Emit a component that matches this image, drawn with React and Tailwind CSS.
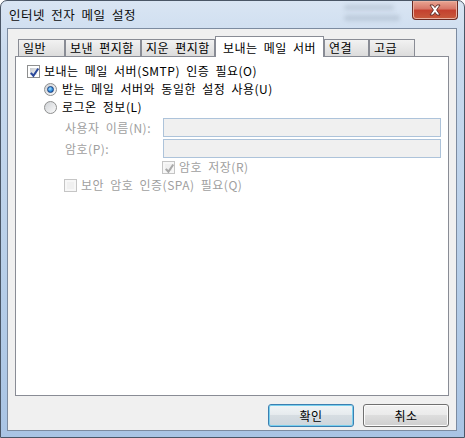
const font = "font-['Noto_Sans_CJK_KR',sans-serif] tracking-[0.5px] [word-spacing:3px]";

function Check({ checked, disabled }) {
  return (
    <span
      className={`flex h-[13px] w-[13px] shrink-0 border p-[2px] ${
        disabled ? "border-[#c5c5c5] bg-[#f7f7f7]" : "border-[#8e8f8f] bg-white"
      }`}
    >
      <span
        className={`relative flex-1 ${
          disabled
            ? "bg-[#f0f0f0]"
            : "bg-linear-to-br from-[#c6cacf] to-[#f3f3f3]"
        }`}
      >
        {checked && (
          <svg
            viewBox="0 0 9 9"
            className="absolute -left-px -top-px h-[11px] w-[11px]"
          >
            <path
              d="M1.5 4.8 L3.6 7.2 L7.6 1.2"
              fill="none"
              stroke={disabled ? "#a9a9a9" : "#2c4a9c"}
              strokeWidth="1.7"
            />
          </svg>
        )}
      </span>
    </span>
  );
}

function Radio({ checked }) {
  return (
    <span className="flex h-[13px] w-[13px] shrink-0 items-center justify-center rounded-full border border-[#8e8f8f] bg-linear-to-br from-[#cfd2d6] to-[#fbfbfb]">
      {checked && (
        <span className="h-[7px] w-[7px] rounded-full border border-[#1c3f7c] bg-[radial-gradient(circle_at_40%_35%,#a6e1ff,#2f8fe0_55%,#0d4fa6)]" />
      )}
    </span>
  );
}

function Tab({ label, w, active }) {
  if (active)
    return (
      <div
        className={`relative z-10 -mb-px flex h-[21px] items-start whitespace-nowrap border border-b-0 border-[#898c95] bg-white pl-[7px] pt-[2px] text-[12px] ${w}`}
      >
        {label}
      </div>
    );
  return (
    <div
      className={`flex h-[17px] items-center whitespace-nowrap border border-b-0 border-[#898c95] bg-linear-to-b from-[#f2f2f2] to-[#dcdcdc] pl-[4px] text-[12px] ${w}`}
    >
      {label}
    </div>
  );
}

function Button({ label, primary }) {
  return (
    <div
      className={`flex h-[23px] w-[86px] items-center justify-center rounded-[3px] border text-[12px] ${
        primary
          ? "border-[#3c7fb1] bg-[linear-gradient(#f1f5f7_0%,#e6ebee_45%,#d6dde2_50%,#cdd6dc_100%)] shadow-[inset_0_0_0_1px_#79d0ee]"
          : "border-[#707070] bg-[linear-gradient(#f2f2f2_0%,#ebebeb_45%,#dddddd_50%,#cfcfcf_100%)] shadow-[inset_0_0_0_1px_#fcfcfc]"
      }`}
    >
      {label}
    </div>
  );
}

export default function App() {
  return (
    <div
      className={`flex h-[438px] w-[465px] flex-col overflow-hidden rounded-t-[7px] border border-[#4a5666] bg-[linear-gradient(180deg,#d9e5f3_0%,#c9daee_12%,#b8cfe9_60%,#a9c4e4_100%)] text-black ${font}`}
    >
      {/* title bar */}
      <div className="flex h-[27px] shrink-0 items-start">
        <div className="pl-[8px] pt-[6px] text-[12.5px] leading-[16px] text-[#0b0b0b]">
          인터넷 전자 메일 설정
        </div>
        {/* blurred stuff behind the glass */}
        <div className="ml-auto mr-[12px] flex flex-col gap-[5px] pt-[4px]">
          <div className="h-[5px] w-[50px] rounded-[3px] bg-[#9aa9ba] opacity-40 blur-[2px]" />
          <div className="h-[6px] w-[56px] rounded-[3px] bg-[#9aa9ba] opacity-40 blur-[2px]" />
        </div>
        <div className="mr-[6px] flex h-[19px] w-[46px] items-center justify-center rounded-b-[4px] border border-t-0 border-[#6b2a22] bg-[linear-gradient(#e9a593_0%,#d67566_45%,#c4402f_50%,#c85a3c_100%)] shadow-[inset_0_0_0_1px_#eab0a0]">
          <svg viewBox="0 0 14 12" className="h-[12px] w-[14px]">
            <path
              d="M2 1 L5 1 L7 3.6 L9 1 L12 1 L8.6 6 L12 11 L9 11 L7 8.4 L5 11 L2 11 L5.4 6 Z"
              fill="#ffffff"
              stroke="#5a2620"
              strokeWidth="0.9"
              strokeLinejoin="round"
            />
          </svg>
        </div>
      </div>

      {/* client area */}
      <div className="mb-[6px] ml-[6px] mr-[7px] flex flex-1 flex-col border border-[#7c8ba0] bg-[#f0f0f0] px-[7px] pt-[7px]">
        {/* tabs */}
        <div className="flex h-[20px] items-end pl-[3px]">
          <Tab label="일반" w="w-[47px]" />
          <Tab label="보낸 편지함" w="w-[76px]" />
          <Tab label="지운 편지함" w="w-[74px]" />
          <Tab label="보내는 메일 서버" w="w-[109px]" active />
          <Tab label="연결" w="w-[45px]" />
          <Tab label="고급" w="w-[46px]" />
        </div>

        {/* panel */}
        <div className="flex h-[340px] flex-col border border-[#898c95] bg-white pr-[7px] pt-[5px] text-[12px]">
          <div className="flex h-[18px] items-center gap-[4px] pl-[11px]">
            <Check checked />
            <span>보내는 메일 서버(SMTP) 인증 필요(O)</span>
          </div>
          <div className="flex h-[18px] items-center gap-[5px] pl-[28px]">
            <Radio checked />
            <span>받는 메일 서버와 동일한 설정 사용(U)</span>
          </div>
          <div className="flex h-[18px] items-center gap-[5px] pl-[28px]">
            <Radio />
            <span>로그온 정보(L)</span>
          </div>
          <div className="mt-[2px] flex h-[19px] items-center pl-[49px]">
            <span className="w-[98px] whitespace-nowrap text-[#a0a0a0]">사용자 이름(N):</span>
            <div className="h-[19px] flex-1 border border-[#adc3da] bg-[#f0f0f0]" />
          </div>
          <div className="mt-[2px] flex h-[19px] items-center pl-[49px]">
            <span className="w-[98px] text-[#a0a0a0]">암호(P):</span>
            <div className="h-[19px] flex-1 border border-[#adc3da] bg-[#f0f0f0]" />
          </div>
          <div className="flex h-[18px] items-center gap-[4px] pl-[146px] text-[#a0a0a0]">
            <Check checked disabled />
            <span>암호 저장(R)</span>
          </div>
          <div className="flex h-[18px] items-center gap-[4px] pl-[48px] text-[#a0a0a0]">
            <Check disabled />
            <span>보안 암호 인증(SPA) 필요(Q)</span>
          </div>
        </div>

        {/* buttons */}
        <div className="flex justify-end gap-[9px] pt-[8px]">
          <Button label="확인" primary />
          <Button label="취소" />
        </div>
      </div>
    </div>
  );
}
